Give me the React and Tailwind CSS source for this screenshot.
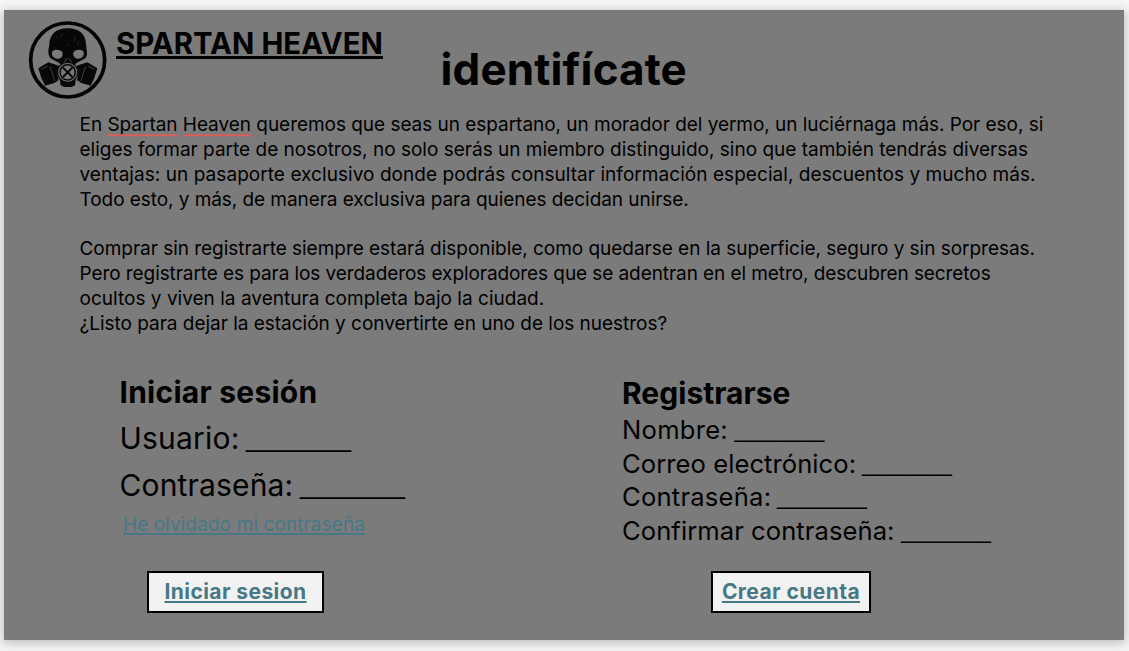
import React from "react";

const BODY_LINES = [
  null,
  ["tracking-[0.005px]", "eliges formar parte de nosotros, no solo serás un miembro distinguido, sino que también tendrás diversas"],
  ["tracking-[0.055px]", "ventajas: un pasaporte exclusivo donde podrás consultar información especial, descuentos y mucho más."],
  ["tracking-[-0.06px]", "Todo esto, y más, de manera exclusiva para quienes decidan unirse."],
  ["", "\u00a0"],
  ["tracking-[-0.028px]", "Comprar sin registrarte siempre estará disponible, como quedarse en la superficie, seguro y sin sorpresas."],
  ["tracking-[-0.077px]", "Pero registrarte es para los verdaderos exploradores que se adentran en el metro, descubren secretos"],
  ["tracking-[0.02px]", "ocultos y viven la aventura completa bajo la ciudad."],
  ["tracking-[-0.018px]", "¿Listo para dejar la estación y convertirte en uno de los nuestros?"],
];

function Logo() {
  return (
    <svg viewBox="0 0 258 252" className="h-[84px] w-[86px] shrink-0">
      <circle cx="128" cy="126" r="111" fill="none" stroke="#040404" strokeWidth="11" />
      <path
        d="M128 31C92 31 73 51 73 80L70 96C69 110 73 119 79 122L97 132C103 134 107 138 109 146L128 150L148 146C150 138 154 134 160 132L179 122C185 118 188 109 185 95L183 78C182 50 164 31 128 31Z"
        fill="#070707"
      />
      <path d="M81 101C89 93 104 93 112 102C115 109 112 118 103 122C94 123 83 118 81 110Z" fill="#7b7b7b" />
      <path d="M176 101C168 93 153 93 146 102C142 109 146 118 155 122C164 123 174 118 176 110Z" fill="#7b7b7b" />
      <path d="M116 135L126 121M141 135L131 121" stroke="#5c5c5c" strokeWidth="2.5" />
      <path d="M94 56L98 63M112 48L107 56M151 58L146 70M160 73L158 82M124 84L131 79" fill="none" stroke="#2c2c2c" strokeWidth="2.5" />
      <path d="M40 151L70 133L102 143L97 168L101 187L88 195L60 203L49 180Z" fill="#080808" />
      <path d="M217 151L187 133L155 143L160 168L156 187L169 195L197 203L208 180Z" fill="#080808" />
      <path d="M75 146L83 168L89 189M49 153L68 145" fill="none" stroke="#484848" strokeWidth="2.5" />
      <path d="M182 146L174 168L168 189M208 153L189 145" fill="none" stroke="#484848" strokeWidth="2.5" />
      <path d="M104 180L107 202L117 207H140L150 202L153 180Z" fill="#080808" />
      <circle cx="128" cy="163" r="32" fill="#080808" />
      <circle cx="128" cy="163" r="27" fill="none" stroke="#6c6c6c" strokeWidth="3.5" />
      <circle cx="128" cy="163" r="20.5" fill="#777777" />
      <path d="M114 149L142 177M142 149L114 177" stroke="#080808" strokeWidth="6" />
      <circle cx="128" cy="163" r="5" fill="#080808" />
    </svg>
  );
}

function Misspelled({ id, children }) {
  return (
    <span className="relative inline-block">
      {children}
      <svg className="absolute bottom-[1px] left-0 h-[3px] w-full">
        <defs>
          <pattern id={id} width="4" height="3" patternUnits="userSpaceOnUse">
            <path d="M-1 0L1 2L3 0.5L5 2" fill="none" stroke="#f5564e" strokeWidth="1.3" />
          </pattern>
        </defs>
        <rect width="100%" height="3" fill={`url(#${id})`} />
      </svg>
    </span>
  );
}

function Field({ label, row, labelStyle, blankStyle }) {
  return (
    <div className={`flex whitespace-nowrap ${row}`}>
      <span className={`shrink-0 ${labelStyle}`}>{label}</span>
      <span className={`font-['Liberation_Sans',sans-serif] ${blankStyle}`}>_______</span>
    </div>
  );
}

function Button({ className, children }) {
  return (
    <a
      href="#"
      className={`flex h-[42px] items-center justify-center border-2 border-black bg-[#f2f2f2] text-[21px] font-bold leading-[38px] whitespace-nowrap text-[#467886] underline decoration-2 underline-offset-2 [text-decoration-skip-ink:none] ${className}`}
    >
      {children}
    </a>
  );
}

export default function App() {
  return (
    <div className="h-[651px] w-[1129px] overflow-hidden bg-[#f4f4f4] pt-[10px] pl-[4px] font-['Inter',sans-serif] text-black">
      <main className="h-[630px] w-[1120px] bg-[#7b7b7b] shadow-[0_2px_9px_1px_rgba(0,0,0,0.22)]">
        <header className="flex h-[103.4px] pt-2 pl-[21px]">
          <Logo />
          <a href="#" className="mt-2 ml-[5px] h-9 text-[29.3px] leading-9 font-bold tracking-[0.06px] whitespace-nowrap underline decoration-[3px] underline-offset-[2px] [text-decoration-skip-ink:none]">
            SPARTAN HEAVEN
          </a>
          <h1 className="mt-[23px] ml-[57.5px] h-14 text-[44px] leading-[56px] font-bold tracking-[0.13px]">identifícate</h1>
        </header>

        <section className="h-[222.6px] pl-[75.5px] text-[19px] leading-[24.8px] whitespace-nowrap">
          {BODY_LINES.map((line, i) =>
            line ? (
              <p key={i} className={line[0]}>{line[1]}</p>
            ) : (
              <p key={i} className="h-[24.8px] tracking-[-0.035px]">
                En <Misspelled id="wave-a">Spartan</Misspelled> <Misspelled id="wave-b">Heaven</Misspelled> queremos que seas un espartano, un morador del yermo, un luciérnaga más. Por eso, si
              </p>
            )
          )}
        </section>

        <div className="flex pt-9 pl-[115.5px]">
          <section className="flex w-[502.5px] flex-col items-start">
            <h2 className="h-10 text-[30px] leading-10 font-bold tracking-[0.25px]">Iniciar sesión</h2>
            <div className="mt-[3px] text-[30px] leading-[47px]">
              <Field label="Usuario:" row="h-[47px]" labelStyle="w-[126.5px] tracking-[0.2px]" blankStyle="text-[27px] leading-[45px]" />
              <Field label="Contraseña:" row="h-[47px]" labelStyle="w-[180.5px] tracking-[0.16px]" blankStyle="text-[27px] leading-[45px]" />
            </div>
            <a href="#" className="mt-1 ml-[3.5px] h-6 text-[19px] leading-6 tracking-[0.093px] text-[#467886] underline decoration-2 underline-offset-2 [text-decoration-skip-ink:none]">
              He olvidado mi contraseña
            </a>
            <Button className="mt-[34px] ml-[27.5px] w-[177px] tracking-[0.42px]">Iniciar sesion</Button>
          </section>

          <section className="flex flex-col items-start pt-px">
            <h2 className="h-10 text-[30px] leading-10 font-bold tracking-[0.03px]">Registrarse</h2>
            <div className="h-[158px] text-[25.6px] leading-[33.6px]">
              <Field label="Nombre:" row="h-[33.6px]" labelStyle="w-[112.5px] tracking-[0.25px]" blankStyle="text-[23.1px]" />
              <Field label="Correo electrónico:" row="h-[33.6px]" labelStyle="w-[240px] tracking-[0.06px]" blankStyle="text-[23.1px]" />
              <Field label="Contraseña:" row="h-[33.6px]" labelStyle="w-[155px] tracking-[0.22px]" blankStyle="text-[23.1px]" />
              <Field label="Confirmar contraseña:" row="h-[33.6px]" labelStyle="w-[279px] tracking-[0.06px]" blankStyle="text-[23.1px]" />
            </div>
            <Button className="ml-[89px] w-[160px] tracking-[0.43px]">Crear cuenta</Button>
          </section>
        </div>
      </main>
    </div>
  );
}
